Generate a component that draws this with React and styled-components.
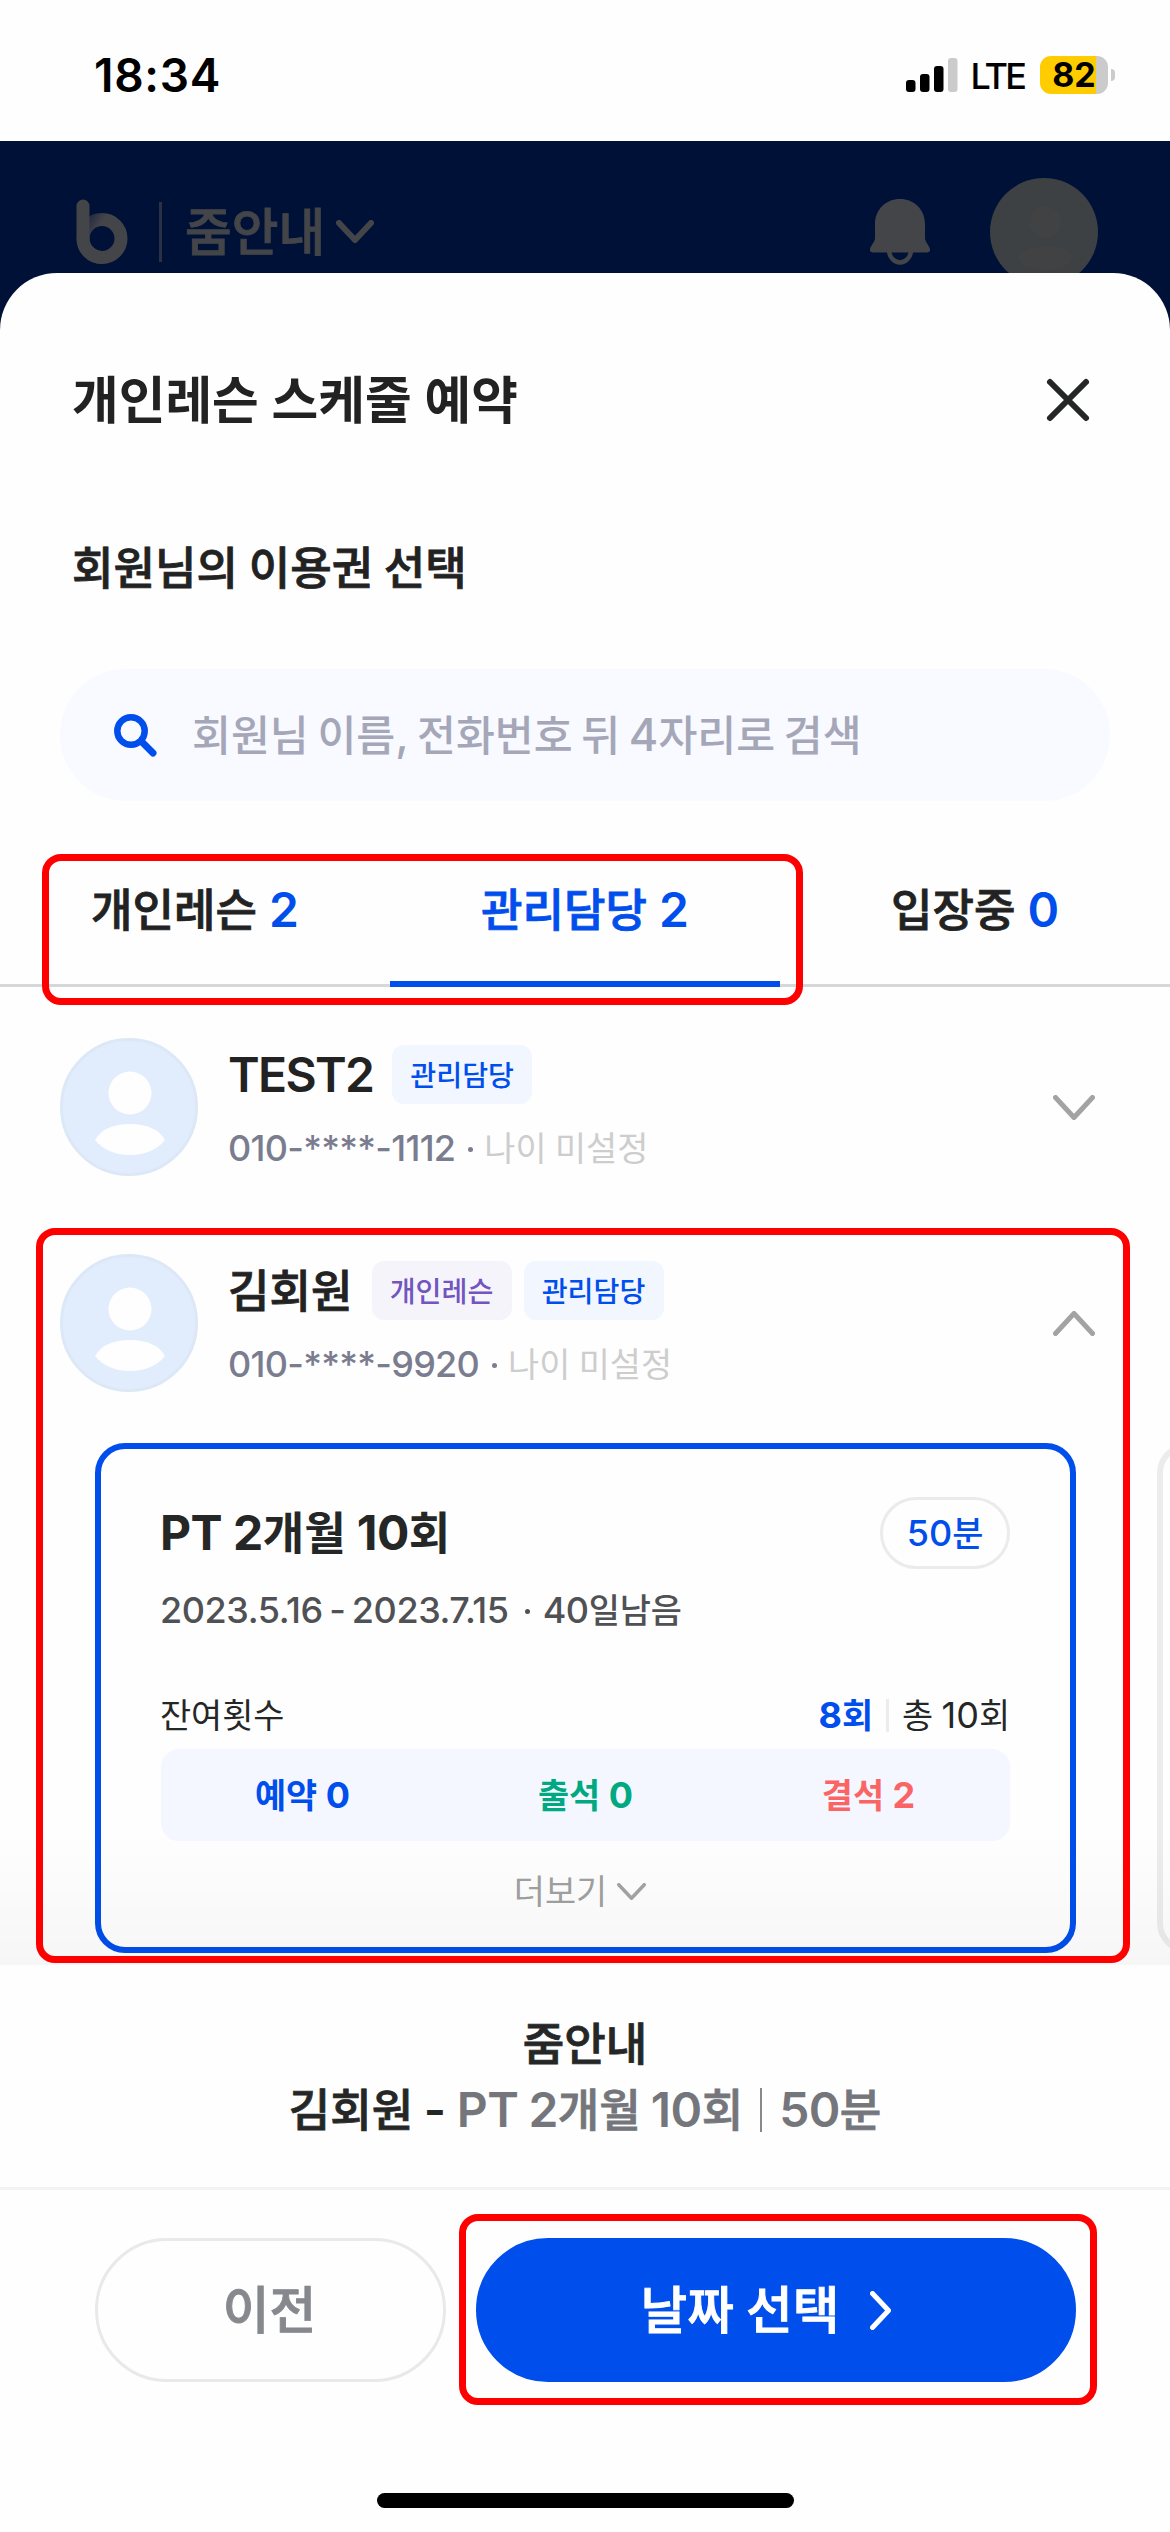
import React from "react";
import styled, { createGlobalStyle, css } from "styled-components";

const blue = "#004eeb";
const ink = "#222222";
const dimmed = "#434548";

const GlobalStyle = createGlobalStyle`
  * {
    box-sizing: border-box;
  }
  body {
    margin: 0;
    background: #ffffff;
    font-family: Inter, "Noto Sans CJK KR", sans-serif;
    color: ${ink};
  }
  svg {
    display: block;
    flex: none;
  }
`;

const Screen = styled.div`
  position: relative;
  display: flex;
  flex-direction: column;
  width: 1170px;
  height: 2532px;
  overflow: hidden;
  background: #fefefe;
`;

/* Text */

const wordSpacing = { 400: -0.05, 500: -0.075, 600: -0.03, 700: 0 };

const Label = styled.span`
  font-size: ${(props) => props.$size}px;
  font-weight: ${(props) => props.$weight};
  line-height: ${(props) => props.$line || 44}px;
  color: ${(props) => props.$color || ink};
  letter-spacing: ${(props) => props.$track || 0}em;
  word-spacing: ${(props) => wordSpacing[props.$weight]}em;
  white-space: pre;
`;

// there is no semibold cut for Hangul, so medium gets a hairline stroke
const semibold = css`
  font-weight: 500;
  -webkit-text-stroke: 0.018em currentColor;
`;

const Hangul = styled.span`
  font-size: 0.94em;
  line-height: 0;
  letter-spacing: 0;
  ${(props) => props.$weight === 600 && semibold}
`;

// Hangul runs are set a little smaller than the latin letters and digits
const Text = ({ children, $size = 36, $weight = 400, ...rest }) => (
  <Label $size={$size} $weight={$weight} {...rest}>
    {children.split(/([가-힣]+)/).map((part, i) =>
      i % 2 ? (
        <Hangul key={i} $weight={$weight}>
          {part}
        </Hangul>
      ) : (
        part
      )
    )}
  </Label>
);

/* Status bar */

const StatusBar = styled.div`
  display: flex;
  align-items: center;
  justify-content: space-between;
  height: 141px;
  padding: 8px 55px 0 94px;
`;

const StatusIcons = styled.div`
  display: flex;
  align-items: center;
`;

const Carrier = styled.div`
  display: flex;
  margin: 2px 16px 0 12px;
`;

const Battery = styled.div`
  display: flex;
  align-items: center;
  justify-content: center;
  width: 68px;
  height: 38px;
  border-radius: 11px;
  background: linear-gradient(90deg, #ffcc00 56px, #cbcbcb 56px);
`;

const BatteryTip = styled.div`
  width: 4px;
  height: 12px;
  margin-left: 3px;
  border-radius: 0 4px 4px 0;
  background: #cbcbcb;
`;

/* App bar */

const AppBar = styled.div`
  display: flex;
  align-items: center;
  flex: none;
  height: 190px;
  padding: 0 72px 9px 76px;
  background: #001138;
`;

const Branch = styled.div`
  display: flex;
  align-items: center;
  gap: 11px;
`;

const HeaderActions = styled.div`
  display: flex;
  align-items: center;
  gap: 60px;
`;

const Divider = styled.div`
  width: ${(props) => props.$width || 3}px;
  height: ${(props) => props.$height}px;
  margin: ${(props) => props.$margin};
  background: ${(props) => props.$color};
`;

const Spacer = styled.div`
  flex: 1;
`;

/* Sheet */

const Sheet = styled.div`
  position: relative;
  display: flex;
  flex-direction: column;
  flex: 1;
  margin-top: -58px;
  border-radius: 57px 57px 0 0;
  background: #fefefe;
`;

const SheetHeader = styled.div`
  display: flex;
  align-items: center;
  justify-content: space-between;
  height: 254px;
  padding: 0 78px 0 72px;
`;

const SubTitle = styled.div`
  display: flex;
  align-items: center;
  height: 81px;
  padding-left: 72px;
`;

const SearchBox = styled.div`
  display: flex;
  align-items: center;
  height: 132px;
  margin: 61px 60px 0;
  padding: 0 54px;
  gap: 35px;
  border-radius: 66px;
  background: #f8faff;
`;

const Tabs = styled.div`
  display: grid;
  grid-template-columns: repeat(3, 1fr);
  height: 186px;
  box-shadow: inset 0 -3px #d6d8d8;
`;

const Tab = styled.div`
  display: flex;
  align-items: center;
  justify-content: center;
  gap: 12px;
  padding-top: 37px;
  border-bottom: 6px solid ${(props) => (props.$active ? blue : "transparent")};
`;

const List = styled.div`
  position: relative;
  height: 978px;
  overflow: hidden;
`;

const Fade = styled.div`
  position: absolute;
  left: 0;
  right: 0;
  bottom: 0;
  height: 135px;
  background: linear-gradient(rgba(0, 0, 0, 0), rgba(0, 0, 0, 0.03));
`;

const MemberRow = styled.div`
  display: flex;
  height: 216px;
  padding: 51px 75px 27px 60px;
`;

const MemberInfo = styled.div`
  display: flex;
  flex-direction: column;
  flex: 1;
  gap: 22px;
  padding: 7px 0 0 30px;
`;

const NameLine = styled.div`
  display: flex;
  align-items: center;
  height: 59px;
  gap: 12px;
`;

const Name = styled.div`
  display: flex;
  margin-right: 7px;
`;

const Badge = styled.div`
  display: flex;
  align-items: center;
  justify-content: center;
  width: 140px;
  height: 59px;
  border-radius: 12px;
  background: ${(props) => (props.$lesson ? "#f6f4fb" : "#f2f6ff")};
`;

const ContactLine = styled.div`
  display: flex;
  align-items: center;
`;

const Dot = styled.span`
  width: 5px;
  height: 5px;
  margin: ${(props) => props.$margin};
  border-radius: 50%;
  background: ${(props) => props.$color};
`;

const Toggle = styled.div`
  display: flex;
  align-items: center;
`;

/* Ticket cards */

const cardFrame = css`
  flex: none;
  width: 981px;
  height: 510px;
  border-radius: 30px;
`;

const CardTrack = styled.div`
  display: flex;
  gap: 81px;
  padding: 24px 0 0 95px;
`;

const Card = styled.div`
  ${cardFrame}
  display: flex;
  flex-direction: column;
  padding: 48px 60px 0 59px;
  border: 6px solid ${blue};
`;

const NextCard = styled.div`
  ${cardFrame}
  border: 6px solid #ececec;
`;

const CardRow = styled.div`
  display: flex;
  align-items: center;
  height: ${(props) => props.$height}px;
  margin-top: ${(props) => props.$top || 0}px;
`;

const Pill = styled.div`
  display: flex;
  align-items: center;
  justify-content: center;
  width: 130px;
  height: 72px;
  border: 3px solid #ebebeb;
  border-radius: 36px;
`;

const Stats = styled.div`
  display: grid;
  grid-template-columns: repeat(3, 1fr);
  align-items: center;
  justify-items: center;
  height: 92px;
  margin: 12px 0 0 1px;
  border-radius: 18px;
  background: #f4f7ff;
`;

const More = styled.div`
  display: flex;
  align-items: center;
  justify-content: center;
  gap: 10px;
  height: 100px;
  padding-right: 10px;
`;

/* Footer */

const Summary = styled.div`
  display: flex;
  flex-direction: column;
  align-items: center;
  height: 225px;
  padding-top: 46px;
  border-bottom: 3px solid #f3f3f3;
`;

const SummaryLine = styled.div`
  display: flex;
  align-items: center;
  height: 66px;
`;

const Actions = styled.div`
  display: flex;
  gap: 30px;
  padding: 48px 94px 0 95px;
`;

const Button = styled.div`
  display: flex;
  align-items: center;
  justify-content: center;
  gap: 31px;
  width: ${(props) => (props.$primary ? 600 : 351)}px;
  height: 144px;
  padding-right: ${(props) => (props.$primary ? 20 : 2)}px;
  border: 3px solid ${(props) => (props.$primary ? blue : "#e9e9e9")};
  border-radius: 72px;
  background: ${(props) => (props.$primary ? blue : "transparent")};
`;

const HomeIndicator = styled.div`
  width: 417px;
  height: 15px;
  margin: 111px auto 0;
  border-radius: 8px;
  background: #000000;
`;

// red guide frames that float over the screen
const Highlight = styled.div`
  position: absolute;
  left: ${(props) => props.$x}px;
  top: ${(props) => props.$y}px;
  width: ${(props) => props.$w}px;
  height: ${(props) => props.$h}px;
  border: 7px solid #ff0000;
  border-radius: 19px;
`;

/* Icons */

const Chevron = ({ w, h, stroke = 5, color, dir = "down" }) => {
  const s = stroke / 2;
  const points = {
    down: `${s},${s} ${w / 2},${h - s} ${w - s},${s}`,
    up: `${s},${h - s} ${w / 2},${s} ${w - s},${h - s}`,
    right: `${s},${s} ${w - s},${h / 2} ${s},${h - s}`,
  };
  return (
    <svg width={w} height={h} viewBox={`0 0 ${w} ${h}`}>
      <polyline
        points={points[dir]}
        fill="none"
        stroke={color}
        strokeWidth={stroke}
        strokeLinecap="round"
        strokeLinejoin="round"
      />
    </svg>
  );
};

const Logo = () => (
  <svg width="52" height="66" viewBox="0 0 52 66">
    <defs>
      <linearGradient id="bowl" x1="0" y1="0" x2="1" y2="0.6">
        <stop offset="0.1" stopColor="#262c3e" />
        <stop offset="0.4" stopColor={dimmed} />
      </linearGradient>
    </defs>
    <circle cx="26" cy="39.5" r="19" fill="none" stroke="url(#bowl)" strokeWidth="13" />
    <path
      d="M7 7v32.500a19 19 0 0 0 19 19"
      fill="none"
      stroke={dimmed}
      strokeWidth="13"
      strokeLinecap="round"
    />
  </svg>
);

const Bell = () => (
  <svg width="60" height="66" viewBox="0 0 60 66">
    <path
      d="M30 0c14 0 25 10.500 25 25v14c0 4 4 7 5 11 0.500 2-1 3.500-3 3.500H3c-2 0-3.500-1.500-3-3.500 1-4 5-7 5-11V25C5 10.500 16 0 30 0z"
      fill={dimmed}
    />
    <path d="M19 51a11 12.500 0 0 0 22 0" fill="none" stroke={dimmed} strokeWidth="4.500" />
  </svg>
);

const HeaderAvatar = () => (
  <svg width="108" height="108" viewBox="0 0 108 108">
    <circle cx="54" cy="54" r="54" fill="#3d4143" />
    <circle cx="55" cy="44" r="16" fill="#404243" />
    <ellipse cx="55" cy="80" rx="27" ry="12" fill="#404243" />
  </svg>
);

const Avatar = () => (
  <svg width="138" height="138" viewBox="0 0 138 138">
    <circle cx="69" cy="69" r="67.500" fill="#e1edfd" stroke="#dce8f6" strokeWidth="3" />
    <circle cx="70" cy="55" r="21.500" fill="#fefefe" />
    <path
      d="M35 102c6-11 19-16 35-16s29 5 35 16c-7 9-20 15-35 15s-28-6-35-15z"
      fill="#fefefe"
    />
  </svg>
);

const Signal = () => (
  <svg width="52" height="34" viewBox="0 0 52 34">
    <rect x="0" y="22" width="9.500" height="12" rx="3" fill="#000" />
    <rect x="14" y="16" width="9.500" height="18" rx="3" fill="#000" />
    <rect x="28" y="8" width="9.500" height="26" rx="3" fill="#000" />
    <rect x="42" y="0" width="9.500" height="34" rx="3" fill="#cbcbcb" />
  </svg>
);

const Close = () => (
  <svg width="48" height="48" viewBox="0 0 48 48">
    <path
      d="M6 6l36 36M42 6L6 42"
      stroke="#252727"
      strokeWidth="6"
      strokeLinecap="round"
    />
  </svg>
);

const Search = () => (
  <svg width="43" height="43" viewBox="0 0 43 43">
    <circle cx="17" cy="17" r="13.700" fill="none" stroke={blue} strokeWidth="6.500" />
    <path d="M27.500 27.500l11.500 11.500" stroke={blue} strokeWidth="7" strokeLinecap="round" />
  </svg>
);

/* Pieces */

const tabs = [
  { name: "개인레슨", count: "2" },
  { name: "관리담당", count: "2", active: true },
  { name: "입장중", count: "0" },
];

const stats = [
  { label: "예약 0", color: blue },
  { label: "출석 0", color: "#00a981" },
  { label: "결석 2", color: "#fb6464" },
];

const Member = ({ name, phone, badges, open }) => (
  <MemberRow>
    <Avatar />
    <MemberInfo>
      <NameLine>
        <Name>
          <Text $size={48} $weight={600} $track={-0.035}>
            {name}
          </Text>
        </Name>
        {badges.map((badge) => (
          <Badge key={badge} $lesson={badge === "개인레슨"}>
            <Text
              $size={30}
              $weight={500}
              $color={badge === "개인레슨" ? "#7255bf" : blue}
            >
              {badge}
            </Text>
          </Badge>
        ))}
      </NameLine>
      <ContactLine>
        <Text $weight={500} $color="#7a7d8f" $track={-0.02}>
          {phone}
        </Text>
        <Dot $margin="3px 11px 0 13px" $color="#7a7d8f" />
        <Text $color="#cdcdcd">나이 미설정</Text>
      </ContactLine>
    </MemberInfo>
    <Toggle>
      <Chevron w={42} h={25} stroke={5} color="#a3a3a3" dir={open ? "up" : "down"} />
    </Toggle>
  </MemberRow>
);

const App = () => (
  <Screen>
    <GlobalStyle />
    <StatusBar>
      <Text $size={46} $weight={600} $color="#000" $track={0.016}>
        18:34
      </Text>
      <StatusIcons>
        <Signal />
        <Carrier>
          <Text $weight={500} $color="#000" $track={-0.08}>
            LTE
          </Text>
        </Carrier>
        <Battery>
          <Text $size={34} $weight={700} $color="#000">
            82
          </Text>
        </Battery>
        <BatteryTip />
      </StatusIcons>
    </StatusBar>
    <AppBar>
      <Logo />
      <Divider $height={60} $margin="0 23px 0 31px" $color="#2b3143" />
      <Branch>
        <Text $size={54} $weight={600} $color={dimmed}>
          줌안내
        </Text>
        <Chevron w={38} h={23} stroke={6} color={dimmed} />
      </Branch>
      <Spacer />
      <HeaderActions>
        <Bell />
        <HeaderAvatar />
      </HeaderActions>
    </AppBar>
    <Sheet>
      <SheetHeader>
        <Text $size={54} $weight={700} $line={66}>
          개인레슨 스케줄 예약
        </Text>
        <Close />
      </SheetHeader>
      <SubTitle>
        <Text $size={48} $weight={600}>
          회원님의 이용권 선택
        </Text>
      </SubTitle>
      <SearchBox>
        <Search />
        <Text $size={45} $weight={500} $color="#a5a7b9">
          회원님 이름, 전화번호 뒤 4자리로 검색
        </Text>
      </SearchBox>
      <Tabs>
        {tabs.map((tab) => (
          <Tab key={tab.name} $active={tab.active}>
            <Text $size={48} $weight={600} $color={tab.active ? blue : ink}>
              {tab.name}
            </Text>
            <Text $size={48} $weight={600} $color={blue}>
              {tab.count}
            </Text>
          </Tab>
        ))}
      </Tabs>
      <List>
        <Member name="TEST2" phone="010-****-1112" badges={["관리담당"]} />
        <Member
          name="김회원"
          phone="010-****-9920"
          badges={["개인레슨", "관리담당"]}
          open
        />
        <CardTrack>
          <Card>
            <CardRow $height={72}>
              <Text $size={48} $weight={700} $color="#252727" $track={-0.01}>
                PT 2개월 10회
              </Text>
              <Spacer />
              <Pill>
                <Text $weight={500} $color={blue}>
                  50분
                </Text>
              </Pill>
            </CardRow>
            <CardRow $height={44} $top={19}>
              <Text $weight={500} $color="#505154" $track={-0.012}>
                2023.5.16 - 2023.7.15
              </Text>
              <Dot $margin="3px 13px 0 16px" $color="#505154" />
              <Text $weight={500} $color="#505154" $track={-0.012}>
                40일남음
              </Text>
            </CardRow>
            <CardRow $height={44} $top={61}>
              <Text $color="#252727">잔여횟수</Text>
              <Spacer />
              <Text $weight={700} $color={blue}>
                8회
              </Text>
              <Divider $height={33} $margin="0 13px" $color="#ececec" />
              <Text $color="#252727">총 10회</Text>
            </CardRow>
            <Stats>
              {stats.map((stat) => (
                <Text key={stat.label} $weight={700} $color={stat.color}>
                  {stat.label}
                </Text>
              ))}
            </Stats>
            <More>
              <Text $color="#a0a0a0">더보기</Text>
              <Chevron w={29} h={17} stroke={3.5} color="#a3a3a3" />
            </More>
          </Card>
          <NextCard />
        </CardTrack>
        <Fade />
      </List>
      <Summary>
        <SummaryLine>
          <Text $size={48} $weight={600} $color="#252727">
            줌안내
          </Text>
        </SummaryLine>
        <SummaryLine>
          <Text $size={48} $weight={600} $color="#252727">
            {"김회원 - "}
          </Text>
          <Text $size={48} $weight={600} $color="#74767b" $track={-0.012}>
            PT 2개월 10회
          </Text>
          <Divider $width={2} $height={44} $margin="0 17px" $color="#87898d" />
          <Text $size={48} $weight={600} $color="#74767b" $track={-0.012}>
            50분
          </Text>
        </SummaryLine>
      </Summary>
      <Actions>
        <Button>
          <Text $size={54} $weight={600} $color="#86888e">
            이전
          </Text>
        </Button>
        <Button $primary>
          <Text $size={54} $weight={600} $color="#ffffff">
            날짜 선택
          </Text>
          <Chevron w={21} h={39} stroke={5} color="#ffffff" dir="right" />
        </Button>
      </Actions>
      <HomeIndicator />
    </Sheet>
    <Highlight $x={42} $y={854} $w={761} $h={151} />
    <Highlight $x={36} $y={1228} $w={1094} $h={735} />
    <Highlight $x={459} $y={2214} $w={638} $h={191} />
  </Screen>
);

export default App;
